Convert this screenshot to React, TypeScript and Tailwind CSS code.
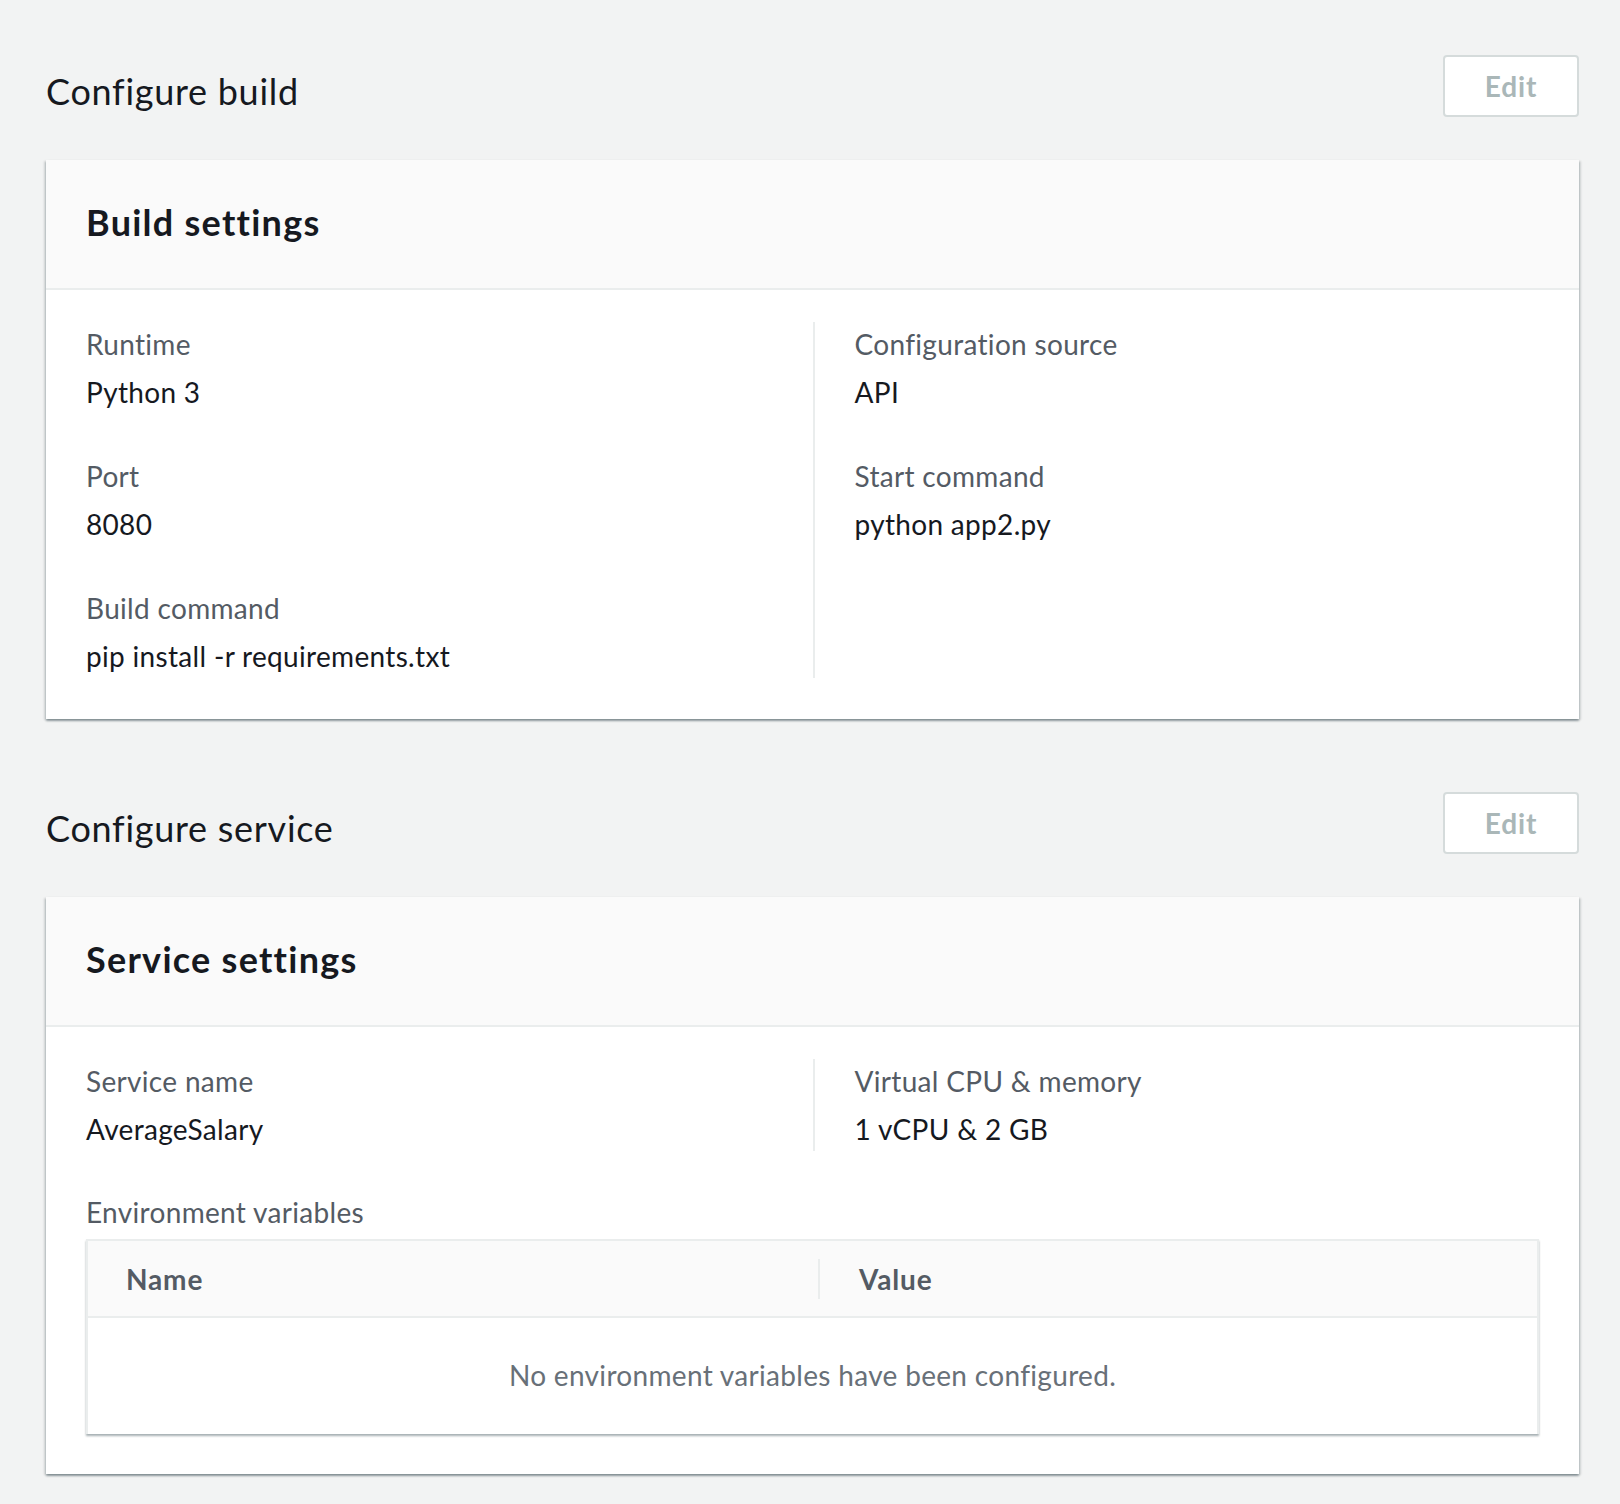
import React from "react";

const font = { fontFamily: "Lato, 'Open Sans', sans-serif" };

function EditButton() {
  return (
    <button className="w-[136px] h-[62px] bg-white border-2 border-[#d5dbdb] rounded-[4px] text-[28px] font-bold text-[#aab7b8] leading-none tracking-[0.03em]">
      Edit
    </button>
  );
}

function Pair({ label, value }: { label: string; value: string }) {
  return (
    <div>
      <div className="text-[28px] leading-[44px] text-[#545b64]">{label}</div>
      <div className="mt-[4px] text-[28px] leading-[44px] text-[#16191f]">{value}</div>
    </div>
  );
}

function Card({ title, children }: { title: string; children: React.ReactNode }) {
  return (
    <div className="mt-[43px] bg-white shadow-[0_2px_2px_0_rgba(0,28,36,0.35),2px_1px_2px_0_rgba(0,28,36,0.12),-2px_1px_2px_0_rgba(0,28,36,0.12)]">
      <div className="h-[130px] bg-[#fafafa] border-b-2 border-[#eaeded] px-10 flex items-center">
        <h3 className="text-[36px] font-bold text-[#16191f] leading-[44px] pb-[4px] tracking-[0.035em]">{title}</h3>
      </div>
      {children}
    </div>
  );
}

function SectionHeader({ title }: { title: string }) {
  return (
    <div className="flex justify-between items-start">
      <h2 className="mt-[12px] text-[36px] leading-[48px] text-[#16191f] tracking-[0.02em]">{title}</h2>
      <EditButton />
    </div>
  );
}

export default function App() {
  return (
    <div style={font} className="min-h-screen bg-[#f2f3f3] pl-[46px] pr-[41px] pt-[55px] pb-[30px] tracking-[0.02em]">
      <SectionHeader title="Configure build" />
      <Card title="Build settings">
        <div className="px-10 pt-[32px] pb-[41px] grid grid-cols-2">
          <div className="flex flex-col gap-[40px]">
            <Pair label="Runtime" value="Python 3" />
            <Pair label="Port" value="8080" />
            <Pair label="Build command" value="pip install -r requirements.txt" />
          </div>
          <div className="border-l-2 border-[#eaeded] pl-10 flex flex-col gap-[40px]">
            <Pair label="Configuration source" value="API" />
            <Pair label="Start command" value="python app2.py" />
          </div>
        </div>
      </Card>

      <div className="mt-[73px]">
        <SectionHeader title="Configure service" />
      </div>
      <Card title="Service settings">
        <div className="px-10 pt-[32px] pb-[40px]">
          <div className="grid grid-cols-2">
            <div>
              <Pair label="Service name" value="AverageSalary" />
            </div>
            <div className="border-l-2 border-[#eaeded] pl-10">
              <Pair label="Virtual CPU & memory" value="1 vCPU & 2 GB" />
            </div>
          </div>
          <div className="mt-[39px] text-[28px] leading-[44px] text-[#545b64]">Environment variables</div>
          <div className="mt-[5px] bg-white border-x-2 border-[#eaeded] shadow-[0_2px_2px_0_rgba(0,28,36,0.35)]">
            <div className="h-[79px] bg-[#fafafa] border-b-2 border-t-2 border-[#eaeded] grid grid-cols-[730px_1fr] items-center">
              <div className="pl-[38px] text-[28px] font-bold text-[#545b64] leading-[44px] tracking-[0.03em]">Name</div>
              <div className="border-l-2 border-[#eaeded] pl-[39px] text-[28px] font-bold text-[#545b64] leading-[40px] tracking-[0.03em]">Value</div>
            </div>
            <div className="h-[116px] flex items-center justify-center text-[28px] text-[#687078] pb-[2px]">
              No environment variables have been configured.
            </div>
          </div>
        </div>
      </Card>
    </div>
  );
}
